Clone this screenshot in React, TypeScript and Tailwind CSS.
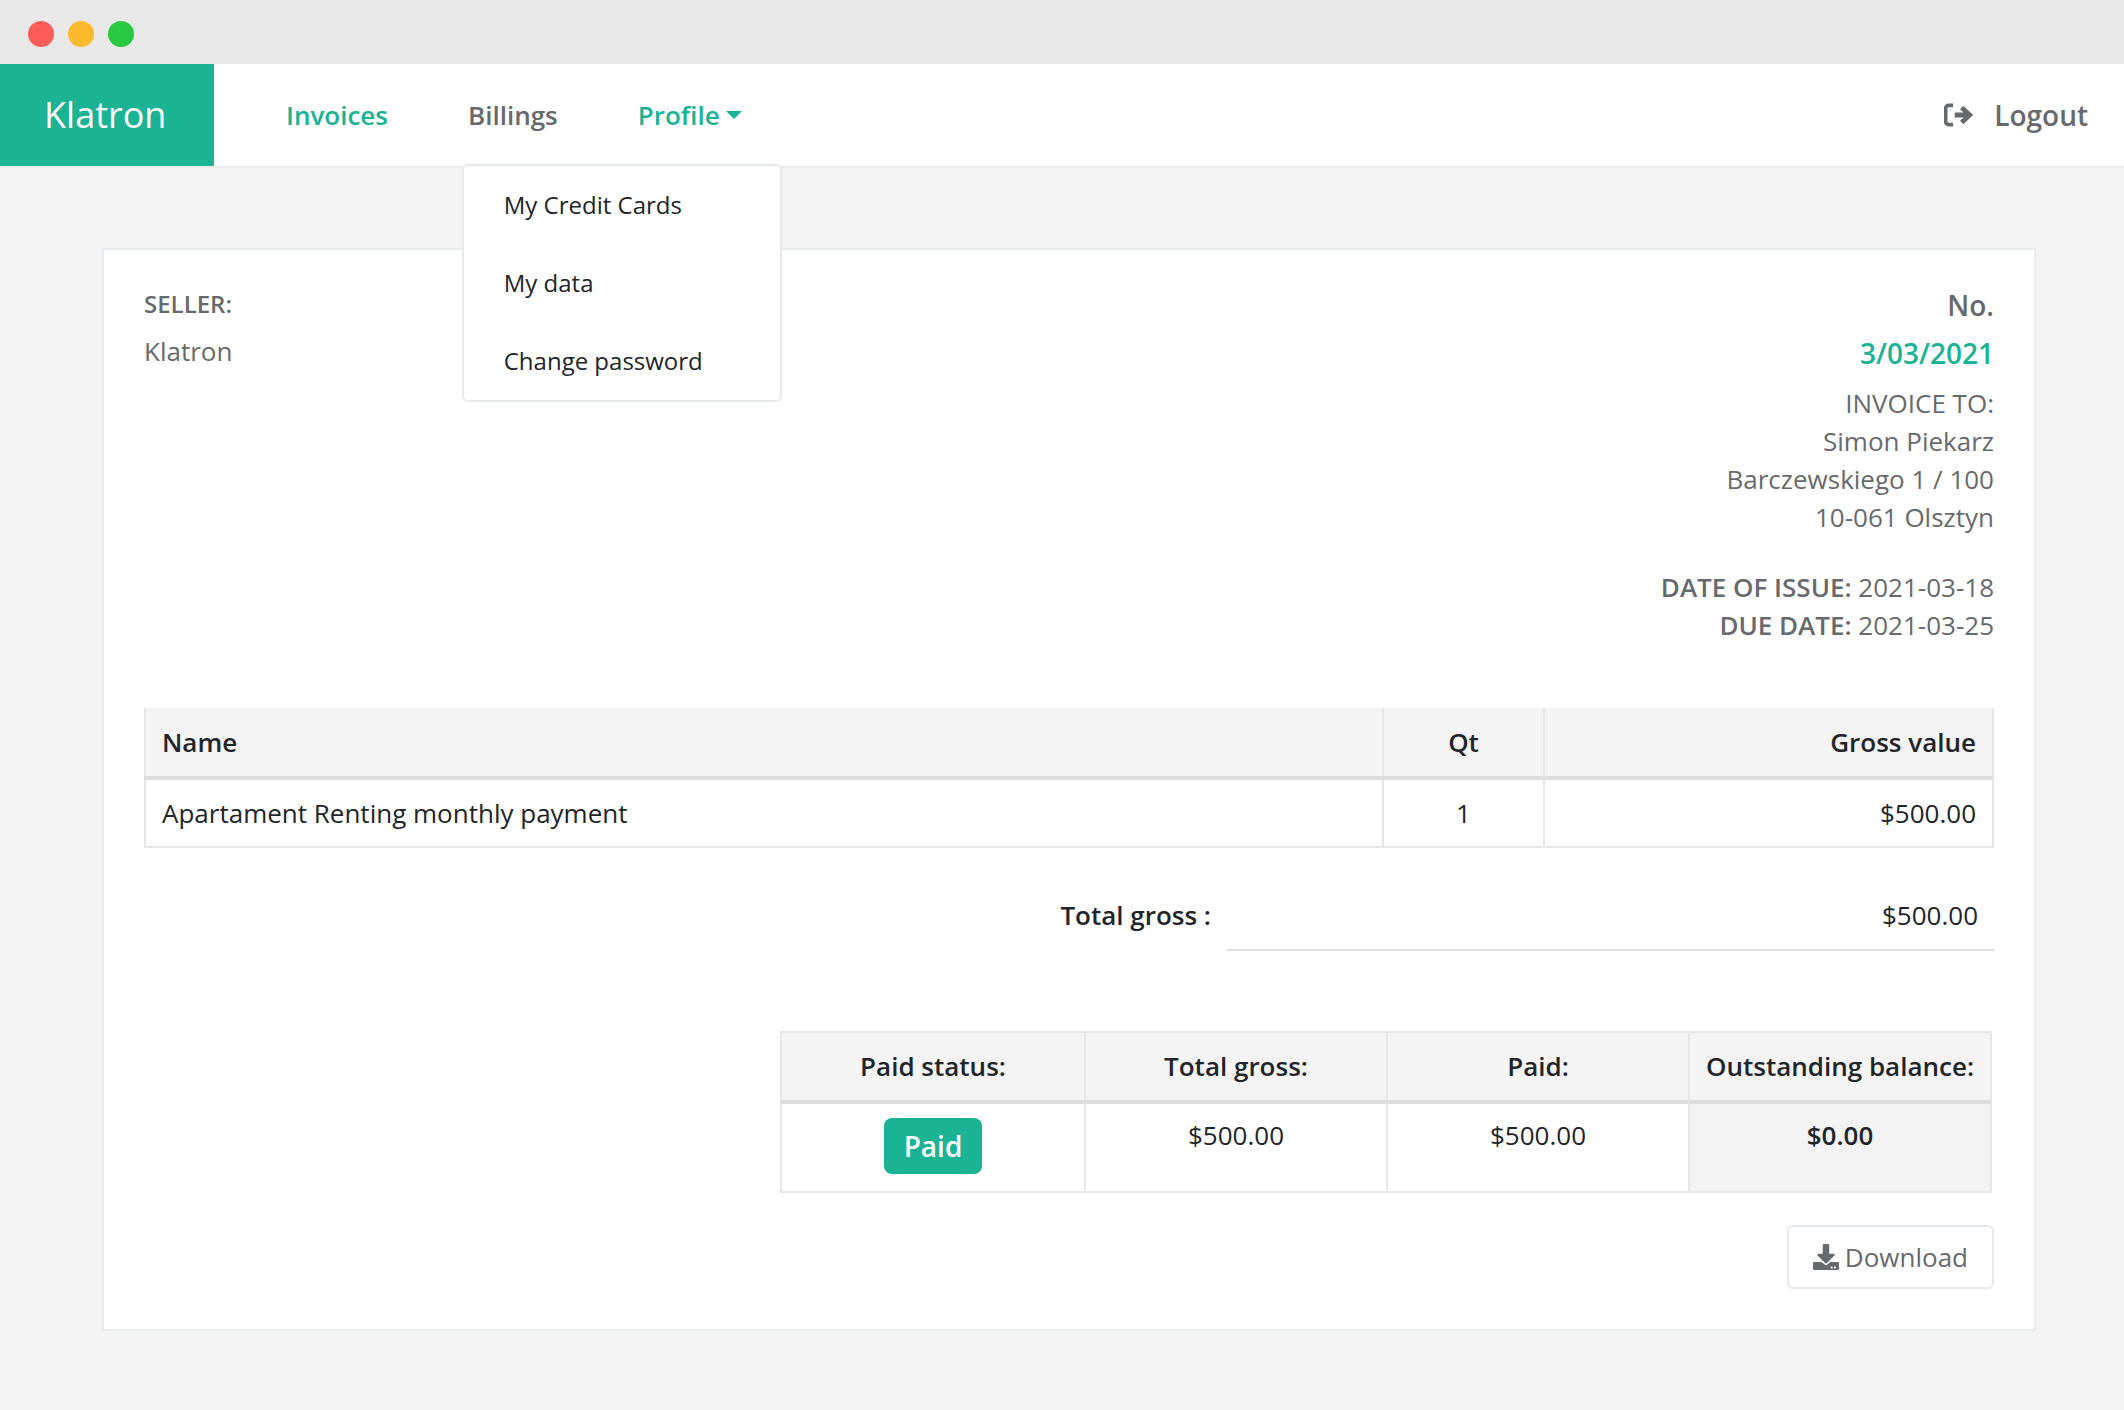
import { FaDownload } from 'react-icons/fa';

const green = 'text-[#1ab394]';

function LogoutIcon() {
  return (
    <svg viewBox="0 0 28 22" className="h-6 w-7.5 fill-none stroke-current">
      <path d="M8.5 2H4.5a3 3 0 0 0-3 3v12a3 3 0 0 0 3 3h4" strokeWidth="3.5" />
      <path d="M10 11h14M16.5 4 24 11l-7.5 7" strokeWidth="4.5" />
    </svg>
  );
}

function NavBar() {
  return (
    <nav className="flex h-[104px] items-stretch border-b-2 border-[#ececec] bg-white">
      <div className="flex w-[214px] items-center bg-[#1ab394] pl-11 text-4xl text-white">Klatron</div>
      <ul className="ml-18 flex items-center gap-20 font-semibold text-[#676a6c]">
        <li className={green}>Invoices</li>
        <li>Billings</li>
        <li className={`relative flex items-center gap-1.5 ${green}`}>
          Profile
          <svg viewBox="0 0 16 8" className="h-2 w-4 fill-current">
            <polygon points="0,0 16,0 8,8" />
          </svg>
          <div className="absolute top-17 -left-44 z-10 w-80 rounded-md border-2 border-[#e7eaec] bg-white text-2xl font-normal text-[#212529]">
            <div className="px-10 py-5 leading-[38px]">My Credit Cards</div>
            <div className="px-10 py-5 leading-[38px]">My data</div>
            <div className="px-10 py-5 leading-[38px]">Change password</div>
          </div>
        </li>
      </ul>
      <div className="ml-auto flex items-center gap-5 pr-9 text-[28px] font-semibold text-[#676a6c]">
        <LogoutIcon />
        Logout
      </div>
    </nav>
  );
}

function InvoiceHeader() {
  return (
    <div className="flex justify-between leading-[38px] text-[#676a6c]">
      <div className="pt-0.5">
        <div className="text-2xl font-semibold">SELLER:</div>
        <div className="mt-3">Klatron</div>
      </div>
      <div className="text-right">
        <div className="text-[28px] font-semibold">No.</div>
        <div className={`mt-2.5 text-[28px] font-semibold ${green}`}>3/03/2021</div>
        <div className="mt-3">INVOICE TO:</div>
        <div>Simon Piekarz</div>
        <div>Barczewskiego 1 / 100</div>
        <div>10-061 Olsztyn</div>
        <div className="mt-8">
          <span className="font-semibold">DATE OF ISSUE:</span> 2021-03-18
        </div>
        <div>
          <span className="font-semibold">DUE DATE:</span> 2021-03-25
        </div>
      </div>
    </div>
  );
}

function ItemsTable() {
  const th = 'h-[70px] border-2 border-t-0 border-b-4 border-[#e7e7e7] border-b-[#dedede] px-4 font-semibold';
  const td = 'border-2 border-[#e7e7e7] px-4';
  return (
    <table className="mt-16 w-full table-fixed border-collapse text-[#212529]">
      <colgroup>
        <col />
        <col className="w-[161px]" />
        <col className="w-[449px]" />
      </colgroup>
      <thead>
        <tr className="bg-[#f4f4f4]">
          <th className={`${th} text-left`}>Name</th>
          <th className={`${th} text-center`}>Qt</th>
          <th className={`${th} text-right`}>Gross value</th>
        </tr>
      </thead>
      <tbody>
        <tr>
          <td className={`h-[69px] ${td}`}>Apartament Renting monthly payment</td>
          <td className={`${td} text-center`}>1</td>
          <td className={`${td} text-right`}>$500.00</td>
        </tr>
      </tbody>
    </table>
  );
}

function TotalRow() {
  return (
    <div className="mt-12 flex justify-end text-[#212529]">
      <div className="pr-4 font-semibold">Total gross :</div>
      <div className="w-[767px] border-b-2 border-[#dfdfdf] pr-4 pb-3.5 text-right">$500.00</div>
    </div>
  );
}

function SummaryTable() {
  const th = 'h-[70px] border-2 border-b-4 border-[#e7e7e7] border-b-[#dedede] font-semibold';
  const td = 'border-2 border-[#e7e7e7] pt-3 align-top';
  return (
    <div className="mt-20 flex justify-end pr-0.5">
      <table className="w-[1212px] table-fixed border-collapse text-center text-[#212529]">
        <thead>
          <tr className="bg-[#f4f4f4]">
            <th className={`w-76 ${th}`}>Paid status:</th>
            <th className={th}>Total gross:</th>
            <th className={th}>Paid:</th>
            <th className={th}>Outstanding balance:</th>
          </tr>
        </thead>
        <tbody>
          <tr>
            <td className={`h-[90px] ${td}`}>
              <span className="mt-0.5 inline-block rounded-lg bg-[#1ab394] px-5 py-2 text-[28px] leading-10 font-semibold text-white">Paid</span>
            </td>
            <td className={td}>$500.00</td>
            <td className={td}>$500.00</td>
            <td className={`bg-[#f3f3f3] font-semibold ${td}`}>$0.00</td>
          </tr>
        </tbody>
      </table>
    </div>
  );
}

export default function App() {
  return (
    <div className="min-h-[1410px] bg-[#f3f3f3] font-['Open_Sans',sans-serif] text-[26px]">
      <div className="flex h-16 items-center gap-3.5 bg-[#e8e8e8] pt-1 pl-7">
        <span className="size-6.5 rounded-full bg-[#fc5d58]" />
        <span className="size-6.5 rounded-full bg-[#fdb92c]" />
        <span className="size-6.5 rounded-full bg-[#28c840]" />
      </div>
      <NavBar />
      <main className="pt-20 pr-[88px] pl-[102px]">
        <div className="border-2 border-[#e9ecef] bg-white px-10 pt-9 pb-10">
          <InvoiceHeader />
          <ItemsTable />
          <TotalRow />
          <SummaryTable />
          <div className="mt-8 flex justify-end">
            <button className="flex h-16 items-center gap-1.5 rounded-md border-2 border-[#e7eaec] bg-white px-6 text-[#676a6c]">
              <FaDownload className="size-6.5" />
              Download
            </button>
          </div>
        </div>
      </main>
    </div>
  );
}
